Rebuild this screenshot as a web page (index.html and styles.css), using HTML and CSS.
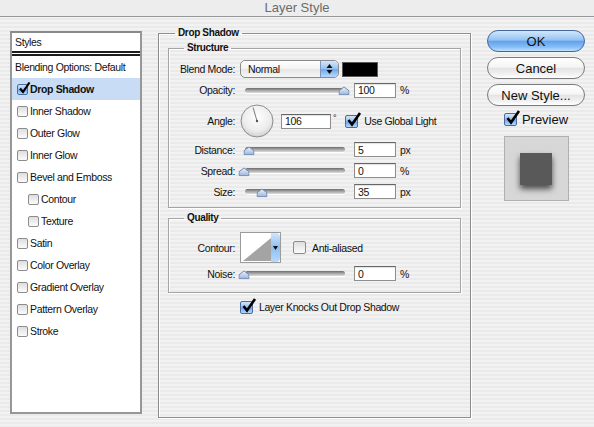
FILE: index.html
```html
<!DOCTYPE html>
<html lang="en">
<head>
  <meta charset="UTF-8" />
  <title>Layer Style</title>
  <link rel="stylesheet" href="styles.css">
</head>
<body>
  <div class="titlebar">Layer Style</div>

  <div class="dialog">
    <div class="styles-list">
      <div class="list-head">Styles</div>
      <div class="list-row plain">Blending Options: Default</div>
      <div class="list-row selected">
        <span class="box on">
          <svg class="tick" width="13" height="13" viewBox="0 0 13 13"><path d="M2 6.5 5 10 11.5 0.5" fill="none" stroke="#000" stroke-width="2.2"/></svg>
        </span>Drop Shadow
      </div>
      <div class="list-row"><span class="box"></span>Inner Shadow</div>
      <div class="list-row"><span class="box"></span>Outer Glow</div>
      <div class="list-row"><span class="box"></span>Inner Glow</div>
      <div class="list-row"><span class="box"></span>Bevel and Emboss</div>
      <div class="list-row sub"><span class="box"></span>Contour</div>
      <div class="list-row sub"><span class="box"></span>Texture</div>
      <div class="list-row"><span class="box"></span>Satin</div>
      <div class="list-row"><span class="box"></span>Color Overlay</div>
      <div class="list-row"><span class="box"></span>Gradient Overlay</div>
      <div class="list-row"><span class="box"></span>Pattern Overlay</div>
      <div class="list-row"><span class="box"></span>Stroke</div>
    </div>

    <fieldset class="group effect">
      <legend>Drop Shadow</legend>

      <fieldset class="group section structure">
        <legend>Structure</legend>

        <div class="row blend">
          <span class="label">Blend Mode:</span>
          <div class="popup">
            <span class="popup-text">Normal</span>
            <span class="popup-arrows">
              <svg width="7" height="10" viewBox="0 0 7 10"><path d="M3.5 0 6.5 4H.5z M3.5 10 6.5 6H.5z" fill="#111"/></svg>
            </span>
          </div>
          <span class="swatch"></span>
        </div>

        <div class="row opacity">
          <span class="label">Opacity:</span>
          <div class="slider">
            <div class="rail">
              <div class="track"></div>
              <span class="thumb" style="left: 99%">
                <svg width="11" height="9" viewBox="0 0 11 9"><defs><linearGradient id="tg" x1="0" y1="0" x2="0" y2="1"><stop offset="0" stop-color="#eef3fb"/><stop offset="1" stop-color="#9db4dc"/></linearGradient></defs><path d="M.5 8.5V4.5L5.5.7l5 3.8v4z" fill="url(#tg)" stroke="#7088b3"/></svg>
              </span>
            </div>
          </div>
          <input class="field" value="100">
          <span class="unit">%</span>
        </div>

        <div class="row angle">
          <span class="label">Angle:</span>
          <svg class="dial" width="34" height="34" viewBox="0 0 34 34">
            <defs>
              <radialGradient id="dg" cx="50%" cy="38%" r="62%">
                <stop offset="0" stop-color="#ffffff"/>
                <stop offset="0.7" stop-color="#ececec"/>
                <stop offset="1" stop-color="#cfcfcf"/>
              </radialGradient>
            </defs>
            <circle cx="17" cy="17" r="16" fill="url(#dg)" stroke="#8d8d8d"/>
            <line x1="17" y1="17" x2="13.1" y2="3.6" stroke="#7a7a7a" stroke-width="1"/>
            <circle cx="17" cy="17" r="1.2" fill="#555"/>
          </svg>
          <input class="field wide" value="106">
          <span class="deg">°</span>
          <span class="box lg on">
            <svg class="tick" width="16" height="16" viewBox="0 0 16 16"><path d="M2.5 8 6 12.5 14 1" fill="none" stroke="#000" stroke-width="2.6"/></svg>
          </span>
          <span class="check-text">Use Global Light</span>
        </div>

        <div class="row distance">
          <span class="label">Distance:</span>
          <div class="slider">
            <div class="rail">
              <div class="track"></div>
              <span class="thumb" style="left: 4%">
                <svg width="11" height="9" viewBox="0 0 11 9"><path d="M.5 8.5V4.5L5.5.7l5 3.8v4z" fill="url(#tg)" stroke="#7088b3"/></svg>
              </span>
            </div>
          </div>
          <input class="field" value="5">
          <span class="unit">px</span>
        </div>

        <div class="row">
          <span class="label">Spread:</span>
          <div class="slider">
            <div class="rail">
              <div class="track"></div>
              <span class="thumb" style="left: -1%">
                <svg width="11" height="9" viewBox="0 0 11 9"><path d="M.5 8.5V4.5L5.5.7l5 3.8v4z" fill="url(#tg)" stroke="#7088b3"/></svg>
              </span>
            </div>
          </div>
          <input class="field" value="0">
          <span class="unit">%</span>
        </div>

        <div class="row">
          <span class="label">Size:</span>
          <div class="slider">
            <div class="rail">
              <div class="track"></div>
              <span class="thumb" style="left: 17%">
                <svg width="11" height="9" viewBox="0 0 11 9"><path d="M.5 8.5V4.5L5.5.7l5 3.8v4z" fill="url(#tg)" stroke="#7088b3"/></svg>
              </span>
            </div>
          </div>
          <input class="field" value="35">
          <span class="unit">px</span>
        </div>
      </fieldset>

      <fieldset class="group section quality">
        <legend>Quality</legend>

        <div class="row contour-row">
          <span class="label">Contour:</span>
          <div class="contour">
            <svg width="30" height="29" viewBox="0 0 30 29"><path d="M2 28 30 5V28z" fill="#a4a4a4"/></svg>
            <span class="contour-drop">
              <svg width="5" height="4" viewBox="0 0 5 4"><path d="M0 0H5L2.5 4z" fill="#111"/></svg>
            </span>
          </div>
          <span class="box lg"></span>
          <span class="check-text">Anti-aliased</span>
        </div>

        <div class="row">
          <span class="label">Noise:</span>
          <div class="slider">
            <div class="rail">
              <div class="track"></div>
              <span class="thumb" style="left: -1%">
                <svg width="11" height="9" viewBox="0 0 11 9"><path d="M.5 8.5V4.5L5.5.7l5 3.8v4z" fill="url(#tg)" stroke="#7088b3"/></svg>
              </span>
            </div>
          </div>
          <input class="field" value="0">
          <span class="unit">%</span>
        </div>
      </fieldset>

      <div class="knock">
        <span class="box lg on">
          <svg class="tick" width="16" height="16" viewBox="0 0 16 16"><path d="M2.5 8 6 12.5 14 1" fill="none" stroke="#000" stroke-width="2.6"/></svg>
        </span>
        <span class="check-text">Layer Knocks Out Drop Shadow</span>
      </div>
    </fieldset>

    <div class="actions">
      <button class="btn default">OK</button>
      <button class="btn">Cancel</button>
      <button class="btn">New Style...</button>
      <div class="preview-toggle">
        <span class="box lg on">
          <svg class="tick" width="16" height="16" viewBox="0 0 16 16"><path d="M2.5 8 6 12.5 14 1" fill="none" stroke="#000" stroke-width="2.6"/></svg>
        </span>
        <span>Preview</span>
      </div>
      <div class="preview">
        <div class="preview-shape"></div>
      </div>
    </div>
  </div>
</body>
</html>
```

FILE: styles.css
```css
* {
  margin: 0;
  padding: 0;
  box-sizing: border-box;
}

body {
  width: 594px;
  height: 427px;
  overflow: hidden;
  font-family: "Liberation Sans", Arial, sans-serif;
  font-size: 10.5px;
  letter-spacing: -0.35px;
  color: #111;
  background: repeating-linear-gradient(to bottom, #f2f2f2 0 2px, #eaeaea 2px 4px);
}

.titlebar {
  height: 17px;
  border-bottom: 1px solid #989898;
  background: #ededed;
  text-align: center;
  font-size: 13px;
  line-height: 16px;
  letter-spacing: 0;
  color: #6b6b6b;
}

.dialog {
  display: flex;
  align-items: flex-start;
  padding: 14px 0 0 10px;
}

/* left list */
.styles-list {
  width: 132px;
  height: 383px;
  flex: none;
  background: #fff;
  border: 2px solid #979797;
  border-top-color: #8a8a8a;
}

.list-head {
  height: 23px;
  padding-left: 3px;
  line-height: 18px;
  border-bottom: 5px double #1c1c1c;
}

.list-row {
  display: flex;
  align-items: center;
  gap: 2px;
  height: 22px;
  padding-left: 5px;
  white-space: nowrap;
}

.list-row.plain {
  padding-left: 3px;
}

.list-row.sub {
  padding-left: 16px;
}

.list-row.selected {
  background: #c8dcf6;
  font-weight: bold;
}

/* checkboxes */
.box {
  position: relative;
  flex: none;
  width: 11px;
  height: 11px;
  border: 1px solid #8c8c8c;
  border-radius: 2px;
  background: linear-gradient(#dedede, #fbfbfb);
}

.box.lg {
  width: 13px;
  height: 13px;
}

.box.on {
  border-color: #4b6c9f;
  background: linear-gradient(#d3e5fa 0%, #93bff0 48%, #6aa5ec 52%, #b4d9fb 100%);
}

.tick {
  position: absolute;
  left: 0;
  top: -4px;
}

.list-row .tick {
  top: -3px;
}

.check-text {
  margin-left: 6px;
  white-space: nowrap;
}

/* group boxes */
.group {
  min-width: 0;
  border: 1px solid #8d8d8d;
  box-shadow: 1px 1px 0 #fff, inset 1px 1px 0 #fff;
}

.group > legend {
  padding: 0 3px;
  font-size: 10px;
  line-height: 12px;
  font-weight: bold;
}

.effect {
  flex: none;
  width: 313px;
  height: 391px;
  margin: -4px 16px 0;
  padding: 3px 9px 0;
}

.effect > legend {
  margin-left: 7px;
}

.section {
  border-color: #a4a4a4;
  padding: 6px 0 5px;
}

.section > legend {
  margin-left: 15px;
}

.quality {
  margin-top: 4px;
  padding: 8px 0;
}

/* rows */
.row {
  display: flex;
  align-items: center;
  height: 21px;
}

.label {
  width: 66px;
  margin-right: 5px;
  text-align: right;
  white-space: nowrap;
}

.row.blend {
  height: 18px;
}

.row.opacity {
  height: 22px;
  margin-top: 1px;
}

.row.angle {
  height: 34px;
  margin-top: 3px;
}

.row.distance {
  margin-top: 1px;
}

.row.contour-row {
  height: 31px;
}

.popup {
  display: flex;
  width: 99px;
  height: 18px;
  border: 1px solid #8a8a8a;
  border-radius: 5px;
  background: linear-gradient(#ffffff, #f3f3f3 50%, #e6e6e6 52%, #f6f6f6);
  overflow: hidden;
}

.popup-text {
  flex: 1;
  padding-left: 7px;
  line-height: 16px;
}

.popup-arrows {
  display: flex;
  align-items: center;
  justify-content: center;
  width: 18px;
  border-left: 1px solid #7f97bf;
  background: linear-gradient(#d5e7fb 0%, #96c2f1 48%, #6ea8ec 52%, #b6dafb 100%);
}

.swatch {
  width: 36px;
  height: 15px;
  margin-left: 3px;
  background: #000;
  border: 1px solid #5a5a5a;
}

.slider {
  width: 110px;
  padding: 0 5px;
  margin-right: 4px;
}

.rail {
  position: relative;
  display: flex;
  align-items: center;
  height: 14px;
}

.track {
  flex: 1;
  height: 5px;
  border-radius: 3px;
  background: linear-gradient(#6c6c6c, #a8a8a8 50%, #dcdcdc);
  box-shadow: 0 1px 0 #fff;
}

.thumb {
  position: absolute;
  top: 50%;
  display: flex;
  transform: translate(-50%, -42%);
}

.field {
  width: 42px;
  height: 15px;
  margin-right: 4px;
  padding: 0 3px;
  border: 1px solid #8e8e8e;
  border-top-color: #666;
  background: #fff;
  box-shadow: inset 0 1px 1px rgba(0, 0, 0, 0.12);
  font: inherit;
  letter-spacing: inherit;
  color: #111;
  outline: none;
}

.field.wide {
  width: 50px;
  margin-right: 2px;
}

.unit {
  white-space: nowrap;
}

.dial {
  flex: none;
  margin-right: 7px;
}

.deg {
  align-self: flex-start;
  margin-top: 9px;
  margin-right: 9px;
  font-size: 9px;
}

.contour {
  display: flex;
  width: 41px;
  height: 31px;
  margin-right: 12px;
  border: 1px solid #9b9b9b;
  background: #fff;
}

.contour-drop {
  display: flex;
  align-items: center;
  justify-content: center;
  width: 9px;
  border-radius: 0 4px 4px 0;
  background: linear-gradient(#d3e6fb, #8fbdf0 50%, #b8dafb);
}

.knock {
  display: flex;
  align-items: center;
  justify-content: center;
  height: 14px;
  margin-top: 7px;
  padding-left: 10px;
}

/* right column */
.actions {
  display: flex;
  flex-direction: column;
  align-items: center;
  width: 98px;
  margin-top: -1px;
}

.btn {
  width: 98px;
  height: 22px;
  border: 1px solid #7b7b7b;
  border-radius: 11px;
  background: linear-gradient(#ffffff, #f5f5f5 45%, #e4e4e4 52%, #f1f1f1 80%, #ffffff);
  font-family: "Liberation Sans", Arial, sans-serif;
  font-size: 13px;
  color: #111;
}

.btn + .btn {
  margin-top: 5px;
}

.btn.default {
  border-color: #45669d;
  background: linear-gradient(#d2e7fc 0%, #95c3f3 45%, #62a3ed 52%, #86bdf4 80%, #bde2fd 100%);
}

.preview-toggle {
  display: flex;
  align-items: center;
  gap: 5px;
  height: 14px;
  margin-top: 6px;
  font-size: 13px;
  letter-spacing: 0;
}

.preview {
  display: flex;
  align-items: center;
  justify-content: center;
  width: 65px;
  height: 65px;
  margin-top: 10px;
  border: 1px solid #b0b0b0;
  background: #d7d7d7;
}

.preview-shape {
  width: 32px;
  height: 32px;
  background: #595959;
  box-shadow: 0 4px 6px rgba(0, 0, 0, 0.65);
}
```
